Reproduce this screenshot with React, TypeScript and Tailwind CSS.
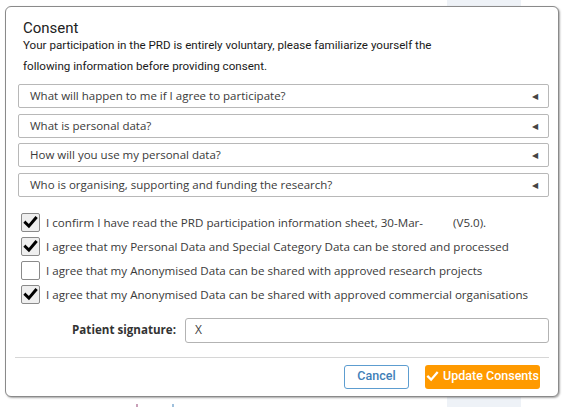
import React from 'react';

const questions = [
  'What will happen to me if I agree to participate?',
  'What is personal data?',
  'How will you use my personal data?',
  'Who is organising, supporting and funding the research?',
];

const CheckMark = ({ className, width = 3 }: { className?: string; width?: number }) => (
  <svg viewBox="0 0 16 16" className={className} fill="none">
    <path d="M2.6 8.2 L6.3 11.9 L13.5 3.4" stroke="currentColor" strokeWidth={width} strokeLinecap="square" />
  </svg>
);

const Box = ({ checked }: { checked: boolean }) => (
  <div
    className={`w-[19px] h-[19px] shrink-0 rounded-[2px] border border-[#8a8a8a] flex items-center justify-center ${
      checked ? 'bg-[#efefef]' : 'bg-white'
    }`}
  >
    {checked && <CheckMark className="w-[15px] h-[15px] text-black" width={3.2} />}
  </div>
);

export default function App() {
  return (
    <div className="relative w-[574px] h-[407px] bg-white overflow-hidden pt-[6px] pl-[5px]">
      {/* page content peeking out behind the modal */}
      <div className="absolute left-[447px] top-0 w-[74px] h-full bg-[#eef2f7]" />
      <div className="absolute left-[136px] top-[404px] w-[2px] h-[3px] bg-[#c9a0b8]" />
      <div className="absolute left-[172px] top-[404px] w-[2px] h-[3px] bg-[#9fc0dc]" />

      <div className="relative w-[554px] h-[391px] bg-white border border-[#8a8a8a] rounded-[6px] shadow-[1px_1px_2px_rgba(0,0,0,0.35)] flex flex-col">
        {/* Header */}
        <div className="pt-[15px] pl-[17px] font-['Roboto',sans-serif] text-[#222]">
          <h2 className="text-[15px] leading-[13px]">Consent</h2>
          <p className="text-[11.6px] leading-[21px] text-[#1a1a1a]">
            Your participation in the PRD is entirely voluntary, please familiarize yourself the
            <br />
            following information before providing consent.
          </p>
        </div>

        {/* Body */}
        <div className="pl-[12px] pr-[9px] font-['Open_Sans',sans-serif] text-[#3a3a3a]">
          <div className="mt-[7px] flex flex-col gap-[5.5px]">
            {questions.map((q) => (
              <div
                key={q}
                className="h-[24px] border border-[#b8b8b8] rounded-[2px] flex items-center justify-between pl-[11px] pr-[10px] text-[11.5px]"
              >
                <span>{q}</span>
                <span className="text-[8px] text-[#444]">◀</span>
              </div>
            ))}
          </div>

          <div className="mt-[14px] flex flex-col text-[11.6px]">
            <label className="h-[24px] flex items-center gap-[6px] pl-[3px]">
              <Box checked />
              <span>
                I confirm I have read the PRD participation information sheet, 30-Mar-
                <span className="inline-block w-[30px]" />
                (V5.0).
              </span>
            </label>
            <label className="h-[24px] flex items-center gap-[6px] pl-[3px]">
              <Box checked />
              <span>I agree that my Personal Data and Special Category Data can be stored and processed</span>
            </label>
            <label className="h-[24px] flex items-center gap-[6px] pl-[3px]">
              <Box checked={false} />
              <span>I agree that my Anonymised Data can be shared with approved research projects</span>
            </label>
            <label className="h-[24px] flex items-center gap-[6px] pl-[3px]">
              <Box checked />
              <span>I agree that my Anonymised Data can be shared with approved commercial organisations</span>
            </label>
          </div>

          <div className="mt-[11px] h-[25px] flex items-center gap-[9px]">
            <span className="w-[158px] text-right font-bold text-[11.6px] text-[#333]">Patient signature:</span>
            <div className="flex-1 h-full border border-[#b3b3b3] rounded-[3px] flex items-center pl-[9px] text-[12px] text-[#444]">
              X
            </div>
          </div>
        </div>

        {/* Footer */}
        <div className="mt-[14px] ml-[9px] mr-[9px] h-px bg-[#d6d6d6]" />
        <div className="mt-[7px] pr-[18px] flex justify-end gap-[16px] font-['Roboto',sans-serif] text-[12.5px] font-medium">
          <button className="w-[65px] h-[24px] rounded-[3px] border border-[#5d9dd0] bg-white text-[#3f80b8]">
            Cancel
          </button>
          <button className="w-[115px] h-[24px] rounded-[3px] bg-[#ff9a00] text-white flex items-center justify-center gap-[4px]">
            <CheckMark className="w-[13px] h-[13px] text-white" width={2.8} />
            Update Consents
          </button>
        </div>
      </div>
    </div>
  );
}
